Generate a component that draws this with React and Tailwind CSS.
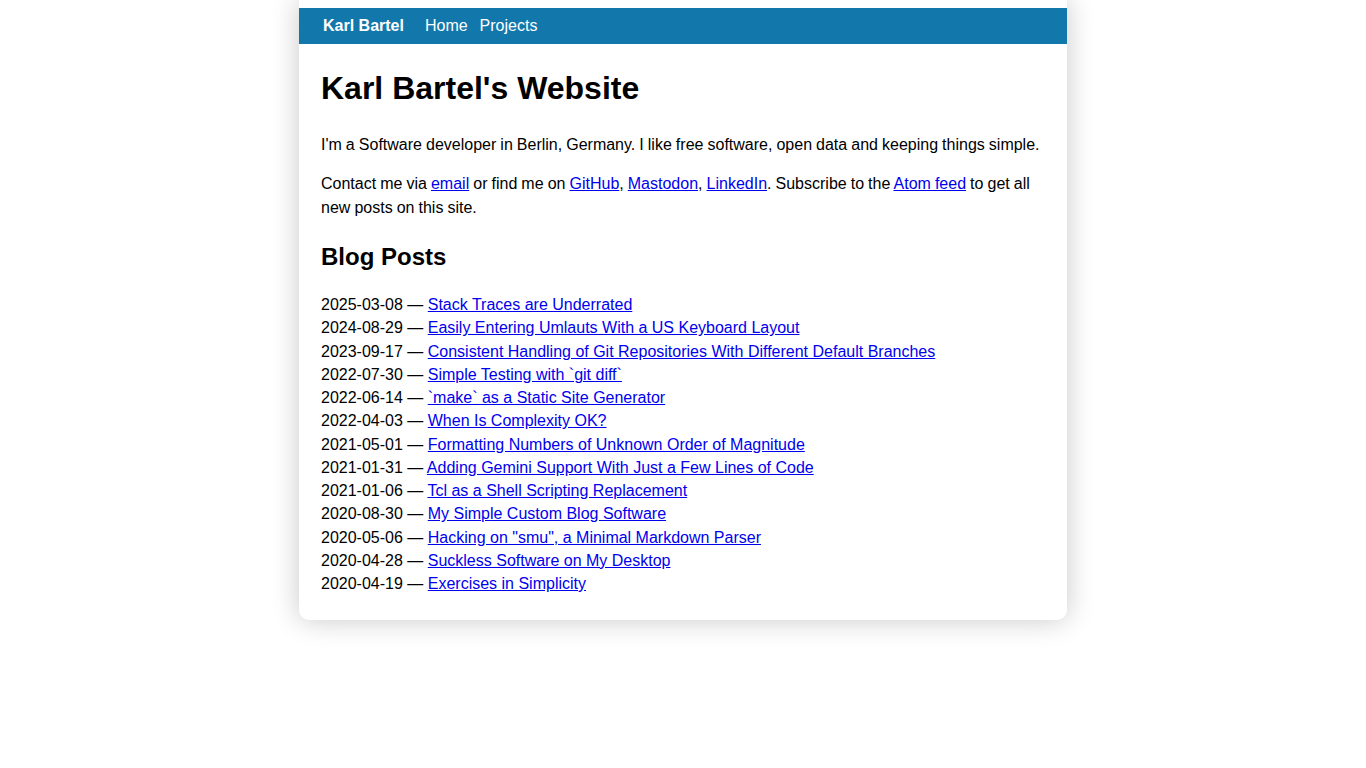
import React from 'react';

const posts = [
  ['2025-03-08', 'Stack Traces are Underrated'],
  ['2024-08-29', 'Easily Entering Umlauts With a US Keyboard Layout'],
  ['2023-09-17', 'Consistent Handling of Git Repositories With Different Default Branches'],
  ['2022-07-30', 'Simple Testing with `git diff`'],
  ['2022-06-14', '`make` as a Static Site Generator'],
  ['2022-04-03', 'When Is Complexity OK?'],
  ['2021-05-01', 'Formatting Numbers of Unknown Order of Magnitude'],
  ['2021-01-31', 'Adding Gemini Support With Just a Few Lines of Code'],
  ['2021-01-06', 'Tcl as a Shell Scripting Replacement'],
  ['2020-08-30', 'My Simple Custom Blog Software'],
  ['2020-05-06', 'Hacking on "smu", a Minimal Markdown Parser'],
  ['2020-04-28', 'Suckless Software on My Desktop'],
  ['2020-04-19', 'Exercises in Simplicity'],
];

const A = ({ children }) => (
  <a href="#" className="text-[#0000ee] underline">{children}</a>
);

const App = () => {
  return (
    <div className="min-h-screen bg-white font-['Liberation_Sans',Arial,sans-serif] text-black text-[16px]">
      <div className="mx-auto w-[768px] bg-white pt-2 pb-[25px] rounded-b-[10px] shadow-[0_0_28px_rgba(0,0,0,0.22)]">
        <nav className="flex items-center h-9 bg-[#1278ab] text-white pl-6">
          <a href="#" className="font-bold mr-[21px]">Karl Bartel</a>
          <a href="#" className="mr-3">Home</a>
          <a href="#">Projects</a>
        </nav>
        <main className="pl-[22px] pr-[18px]">
          <h1 className="mt-[26px] text-[32px] leading-[37px] font-bold">Karl Bartel's Website</h1>
          <p className="mt-[26px] leading-6 [word-spacing:-0.4px]">
            I'm a Software developer in Berlin, Germany. I like free software, open data and keeping things simple.
          </p>
          <p className="mt-[15px] leading-6 [word-spacing:-0.4px]">
            Contact me via <A>email</A> or find me on <A>GitHub</A>, <A>Mastodon</A>, <A>LinkedIn</A>. Subscribe to the <A>Atom feed</A> to get all new posts on this site.
          </p>
          <h2 className="mt-[23px] text-[24px] leading-7 font-bold">Blog Posts</h2>
          <ul className="mt-[22px]">
            {posts.map(([date, title]) => (
              <li key={date + title} className="leading-[23.25px]">
                {date} — <A>{title}</A>
              </li>
            ))}
          </ul>
        </main>
      </div>
    </div>
  );
};

export default App;
